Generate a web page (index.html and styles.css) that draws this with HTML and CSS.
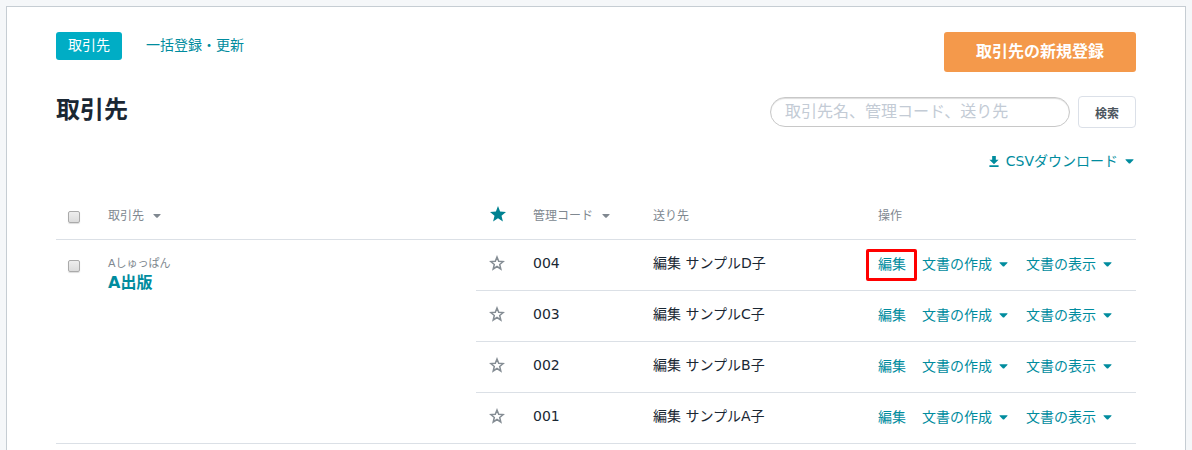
FILE: index.html
```
<!DOCTYPE html>
<html lang="ja">
<head>
    <meta charset="UTF-8">
    <meta name="viewport" content="width=device-width, initial-scale=1.0">
    <title>取引先</title>
    <link rel="stylesheet" href="styles.css">
</head>
<body>
    <!-- shared icons -->
    <svg width="0" height="0" class="sprite" aria-hidden="true">
        <symbol id="star" viewBox="0 0 16 16">
            <path d="M8 0 L10.1 5.4 L16 5.9 L11.5 9.7 L12.9 15.4 L8 12.3 L3.1 15.4 L4.5 9.7 L0 5.9 L5.9 5.4 Z"/>
        </symbol>
        <symbol id="star-o" viewBox="0 0 16 16">
            <path d="M8 2 L9.7 6.3 L14.2 6.6 L10.7 9.5 L11.8 14 L8 11.5 L4.2 14 L5.3 9.5 L1.8 6.6 L6.3 6.3 Z" fill="none" stroke="currentColor" stroke-width="1.5"/>
        </symbol>
        <symbol id="caret" viewBox="0 0 10 5">
            <path d="M0.8 0 H9.2 Q9.8 0.2 9.3 0.8 L5.6 4.6 Q5 5 4.4 4.6 L0.7 0.8 Q0.2 0.2 0.8 0 Z"/>
        </symbol>
    </svg>
    <main class="panel">
        <div class="topbar">
            <nav class="tabs">
                <a href="#" class="tab active">取引先</a>
                <a href="#" class="tab">一括登録・更新</a>
            </nav>
            <button type="button" class="btn-new">取引先の新規登録</button>
        </div>
        <div class="title-row">
            <h1>取引先</h1>
            <form class="search">
                <input type="text" class="search-input" aria-label="検索キーワード" placeholder="取引先名、管理コード、送り先">
                <button type="button" class="btn-search">検索</button>
            </form>
        </div>
        <div class="csv-row">
            <button type="button" class="dropdown">
                <svg class="download" viewBox="0 0 10 12"><path d="M3 0 H7 V4 H10 L5 9 L0 4 H3 Z M0 10 H10 V12 H0 Z"/></svg>
                CSVダウンロード
                <svg class="caret"><use href="#caret"/></svg>
            </button>
        </div>
        <table class="partners">
            <colgroup>
                <col class="col-check">
                <col>
                <col class="col-star">
                <col class="col-code">
                <col class="col-dest">
                <col class="col-action">
            </colgroup>
            <thead>
                <tr>
                    <th class="check"><input type="checkbox" aria-label="すべて選択"></th>
                    <th><button type="button" class="sort">取引先 <svg class="caret"><use href="#caret"/></svg></button></th>
                    <th><svg class="star on"><use href="#star"/></svg></th>
                    <th><button type="button" class="sort">管理コード <svg class="caret"><use href="#caret"/></svg></button></th>
                    <th>送り先</th>
                    <th>操作</th>
                </tr>
            </thead>
            <tbody>
                <tr>
                    <td class="check" rowspan="4"><input type="checkbox" aria-label="A出版を選択"></td>
                    <td class="company" rowspan="4">
                        <div class="kana">Aしゅっぱん</div>
                        <a href="#" class="company-name">A出版</a>
                    </td>
                    <td><svg class="star"><use href="#star-o"/></svg></td>
                    <td>004</td>
                    <td>編集 サンプルD子</td>
                    <td>
                        <div class="actions">
                            <a href="#" class="edit marked">編集</a>
                            <button type="button" class="dropdown">文書の作成 <svg class="caret"><use href="#caret"/></svg></button>
                            <button type="button" class="dropdown">文書の表示 <svg class="caret"><use href="#caret"/></svg></button>
                        </div>
                    </td>
                </tr>
                <tr>
                    <td><svg class="star"><use href="#star-o"/></svg></td>
                    <td>003</td>
                    <td>編集 サンプルC子</td>
                    <td>
                        <div class="actions">
                            <a href="#" class="edit">編集</a>
                            <button type="button" class="dropdown">文書の作成 <svg class="caret"><use href="#caret"/></svg></button>
                            <button type="button" class="dropdown">文書の表示 <svg class="caret"><use href="#caret"/></svg></button>
                        </div>
                    </td>
                </tr>
                <tr>
                    <td><svg class="star"><use href="#star-o"/></svg></td>
                    <td>002</td>
                    <td>編集 サンプルB子</td>
                    <td>
                        <div class="actions">
                            <a href="#" class="edit">編集</a>
                            <button type="button" class="dropdown">文書の作成 <svg class="caret"><use href="#caret"/></svg></button>
                            <button type="button" class="dropdown">文書の表示 <svg class="caret"><use href="#caret"/></svg></button>
                        </div>
                    </td>
                </tr>
                <tr>
                    <td><svg class="star"><use href="#star-o"/></svg></td>
                    <td>001</td>
                    <td>編集 サンプルA子</td>
                    <td>
                        <div class="actions">
                            <a href="#" class="edit">編集</a>
                            <button type="button" class="dropdown">文書の作成 <svg class="caret"><use href="#caret"/></svg></button>
                            <button type="button" class="dropdown">文書の表示 <svg class="caret"><use href="#caret"/></svg></button>
                        </div>
                    </td>
                </tr>
            </tbody>
        </table>
    </main>
</body>
</html>
```
FILE: styles.css
```
* {
    box-sizing: border-box;
}
body {
    margin: 0;
    padding: 6px 6px 0;
    background-color: #f5f7f9;
    color: #1a2733;
    font-family: "DejaVu Sans", "Noto Sans CJK JP", sans-serif;
    font-size: 14px;
    line-height: 22px;
}
a {
    color: #008c9e;
    text-decoration: none;
}
button {
    font-family: inherit;
    cursor: pointer;
}
svg {
    fill: currentColor;
}
.sprite {
    position: absolute;
}
.panel {
    min-height: calc(100vh - 6px);
    padding: 25px 49px 6px;
    background-color: white;
    border: 1px solid #c6cdd3;
    border-bottom: none;
}
.topbar {
    display: flex;
    justify-content: space-between;
    align-items: flex-start;
}
.tabs {
    display: flex;
    gap: 12px;
}
.tab {
    padding: 2px 12px 4px;
    border-radius: 3px;
}
.tab.active {
    background-color: #00adc5;
    color: white;
}
.btn-new {
    width: 192px;
    height: 40px;
    padding: 0 0 4px;
    border: none;
    border-radius: 3px;
    background-color: #f4994b;
    color: white;
    font-size: 16px;
    font-weight: bold;
}
.title-row {
    display: flex;
    justify-content: space-between;
    align-items: center;
    margin-top: 24px;
}
h1 {
    margin: 0;
    padding-bottom: 4px;
    font-size: 24px;
    line-height: 28px;
}
.search {
    display: flex;
    align-items: center;
    gap: 8px;
}
.search-input {
    width: 300px;
    height: 30px;
    padding: 0 14px 2px;
    border: 1px solid #c8c8c8;
    border-radius: 15px;
    box-shadow: inset 0 1px 1px #ddd;
    font-family: inherit;
    font-size: 16px;
}
.search-input::placeholder {
    color: #c3cbd5;
}
.btn-search {
    width: 58px;
    height: 32px;
    padding: 0;
    border: 1px solid #dbe0e8;
    border-radius: 4px;
    background-color: white;
    color: #4c565e;
    font-size: 12px;
    font-weight: bold;
}
.csv-row {
    display: flex;
    justify-content: flex-end;
    margin: 22px 2px 18px 0;
}
.dropdown,
.sort {
    display: flex;
    align-items: center;
    gap: 7px;
    padding: 0;
    border: none;
    background: none;
    color: #008c9e;
    font-size: 14px;
    line-height: 22px;
}
.caret {
    width: 9px;
    height: 5px;
}
.download {
    width: 10px;
    height: 11px;
}
.partners {
    width: 100%;
    table-layout: fixed;
    border-spacing: 0;
}
.col-check {
    width: 40px;
}
.col-star {
    width: 45px;
}
.col-code {
    width: 120px;
}
.col-dest {
    width: 225px;
}
.col-action {
    width: 270px;
}
th,
td {
    padding: 12px 12px 16px;
    border-bottom: 1px solid #dbe0e6;
    text-align: left;
    vertical-align: top;
}
th {
    padding: 15px 12px 12px;
    color: #808890;
    font-size: 12px;
    font-weight: normal;
}
.sort {
    gap: 9px;
    color: #808890;
    font-size: 12px;
}
.sort .caret {
    width: 8px;
    height: 4px;
}
.check input {
    display: block;
    appearance: none;
    width: 12px;
    height: 12px;
    margin: 8px 0 0;
    border: 1px solid #aaa;
    border-radius: 2px;
    background-image: linear-gradient(#eee, #dcdcdc);
    box-shadow: 0 1px 1px #ddd;
}
th.check input {
    margin-top: 6px;
}
.star {
    display: block;
    width: 16px;
    height: 16px;
    margin: 3px 0 0 1px;
    color: #858d94;
}
.star.on {
    margin: 1px 0 0 2px;
    color: #008291;
}
td.company {
    padding-top: 16px;
}
.kana {
    color: #808890;
    font-size: 11px;
    line-height: 16px;
}
.company-name {
    display: block;
    font-size: 16px;
    font-weight: bold;
    line-height: 22px;
}
.actions {
    display: flex;
    gap: 18px;
    padding-top: 1px;
    margin-bottom: -1px;
}
.edit {
    position: relative;
    margin-right: -2px;
}
/* highlight frame */
.marked::after {
    content: "";
    position: absolute;
    inset: -4px -11px -6px -12px;
    border: 3px solid red;
    border-radius: 2px;
}
```
